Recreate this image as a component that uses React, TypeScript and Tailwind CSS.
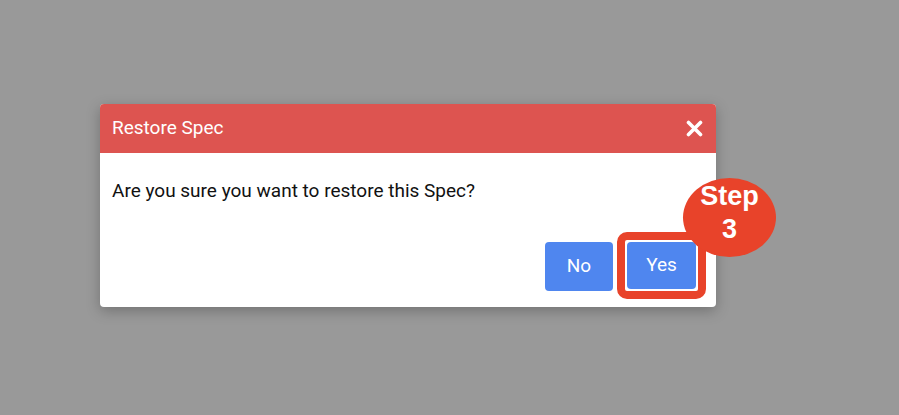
export default function App() {
  return (
    <div
      className="w-[899px] h-[415px] bg-[#999999] pt-[104px] pl-[100px]"
      style={{ fontFamily: "Roboto, 'Liberation Sans', sans-serif" }}
    >
      <div className="relative w-[616px] h-[203px] bg-white rounded-[4px] shadow-[0_4px_14px_rgba(0,0,0,0.25)] flex flex-col">
        <div className="h-[49px] bg-[#dd5450] rounded-t-[4px] flex items-center justify-between pl-3 pr-[13px]">
          <span className="text-white text-[19px]">Restore Spec</span>
          <svg width="17" height="17" viewBox="0 0 17 17">
            <path d="M2.5 2.5 L14.5 14.5 M14.5 2.5 L2.5 14.5" stroke="#fff" strokeWidth="3.6" strokeLinecap="round" />
          </svg>
        </div>
        <div className="pl-3 pt-[24px] text-[19px] leading-[27px] text-[#111]">
          Are you sure you want to restore this Spec?
        </div>
        <div className="mt-auto flex justify-end gap-[14px] pr-[20px] pb-[16px]">
          <button className="w-[68px] h-[49px] rounded-[4px] bg-[#4f86ef] text-white text-[19px]">No</button>
          <div className="relative">
            <div className="absolute -left-[10px] -right-[10px] -top-[10px] -bottom-[8px] border-[8px] border-[#e8432a] rounded-[10px]" />
            <button className="relative w-[69px] h-[47px] rounded-[4px] bg-[#4f86ef] text-white text-[19px]">Yes</button>
          </div>
        </div>
        <div
          className="absolute left-[583px] top-[74px] w-[93px] h-[79px] rounded-[50%] bg-[#e8432a] flex flex-col items-center justify-center pb-[10px] text-white font-bold text-[27px] leading-[33px]"
          style={{ fontFamily: "'Liberation Sans', Arial, sans-serif" }}
        >
          <span>Step</span>
          <span>3</span>
        </div>
      </div>
    </div>
  );
}
